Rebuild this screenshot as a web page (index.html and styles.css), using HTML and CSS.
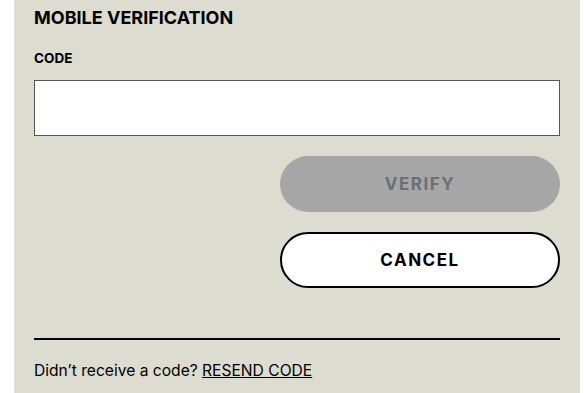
FILE: index.html
```html
<!DOCTYPE html>
<html>
<head>
<meta charset="utf-8">
<link rel="stylesheet" href="styles.css">
</head>
<body>
<div class="panel">
  <h2 class="title">MOBILE VERIFICATION</h2>
  <label class="label" for="code">CODE</label>
  <input class="input" id="code" type="text">
  <div class="actions">
    <button class="btn btn-verify" type="button">VERIFY</button>
    <button class="btn btn-cancel" type="button">CANCEL</button>
  </div>
  <hr class="divider">
  <p class="resend">Didn’t receive a code? <a class="resend-link" href="#">RESEND CODE</a></p>
</div>
</body>
</html>
```

FILE: styles.css
```css
html, body {
  margin: 0;
  padding: 0;
  background: #ffffff;
  height: 100%;
}
body {
  font-family: Inter, "Liberation Sans", sans-serif;
  color: #000;
}
.panel {
  margin-left: 14px;
  width: 566px;
  min-height: 393px;
  box-sizing: border-box;
  background: #dcddd0;
  padding: 7px 20px 0 20px;
  display: flex;
  flex-direction: column;
}
.title {
  margin: 0;
  font-size: 18px;
  line-height: 22px;
  font-weight: 700;
}
.label {
  margin-top: 21px;
  font-size: 13.5px;
  line-height: 16px;
  font-weight: 700;
}
.input {
  margin-top: 14px;
  height: 56px;
  box-sizing: border-box;
  border: 1px solid #555;
  background: #fff;
  padding: 0 12px;
  font-size: 16px;
  outline: none;
}
.actions {
  margin-top: 20px;
  display: flex;
  flex-direction: column;
  align-items: flex-end;
  gap: 20px;
}
.btn {
  width: 280px;
  height: 56px;
  border-radius: 28px;
  box-sizing: border-box;
  font-family: Inter, "Liberation Sans", sans-serif;
  font-size: 17px;
  font-weight: 700;
  letter-spacing: 1.5px;
  cursor: pointer;
}
.btn-verify {
  background: #a6a6a6;
  border: none;
  color: #6b6f77;
}
.btn-cancel {
  background: #fff;
  border: 2px solid #000;
  color: #000;
}
.divider {
  margin: 50px 0 0 0;
  border: none;
  height: 2px;
  background: #000;
}
.resend {
  margin: 21px 0 0 0;
  font-size: 15.6px;
  line-height: 20px;
}
.resend-link {
  color: #000;
  text-decoration: underline;
}
```
